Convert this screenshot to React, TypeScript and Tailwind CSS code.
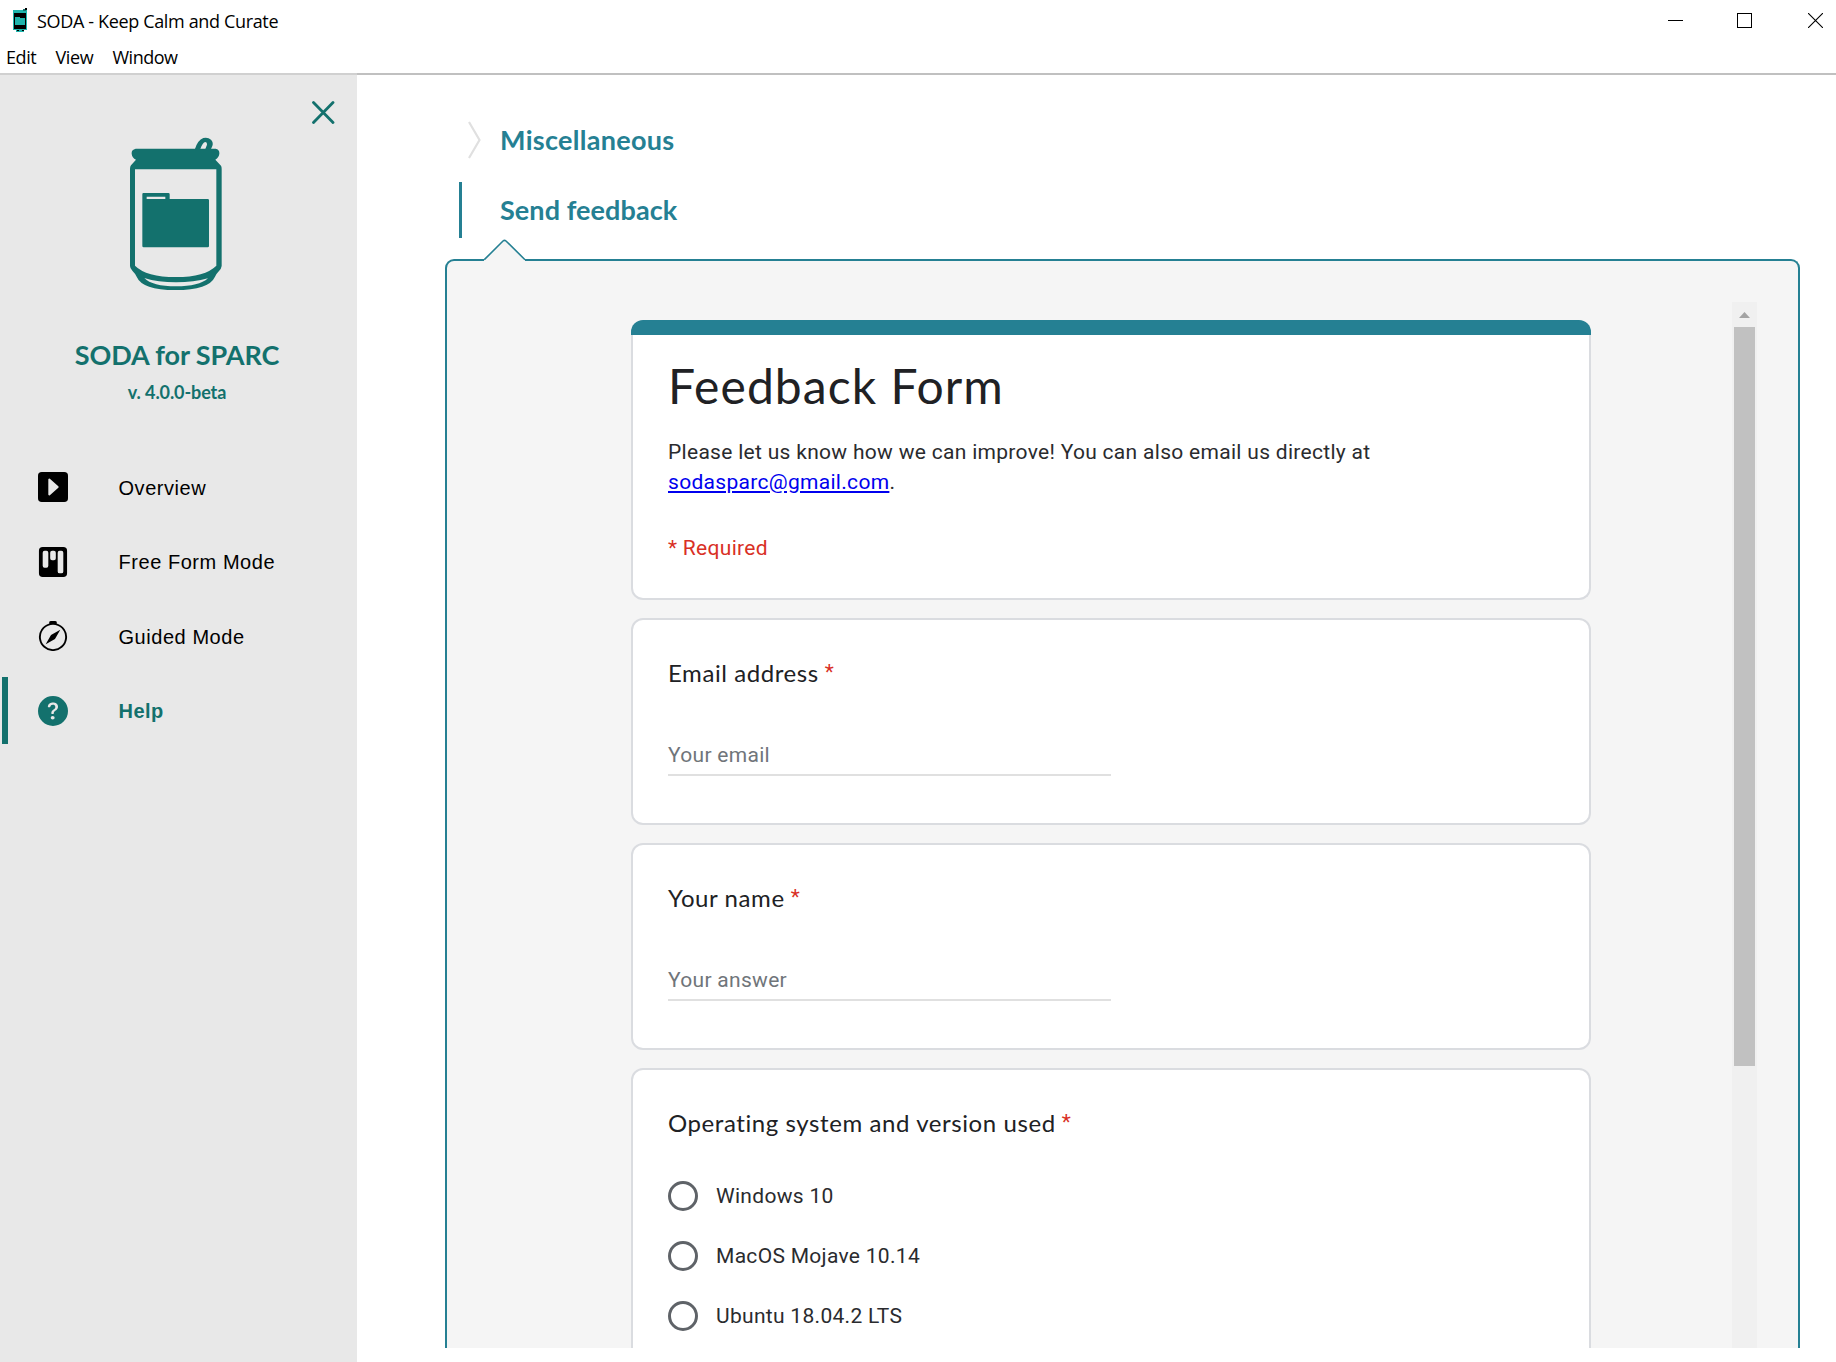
import type { ReactNode } from "react";
import {
  BsCaretRightSquareFill,
  BsCompass,
  BsKanbanFill,
  BsQuestionCircleFill,
} from "react-icons/bs";

function AppIcon() {
  return (
    <svg width="15" height="24" viewBox="0 0 15 24" shapeRendering="crispEdges">
      <rect x="0" y="2" width="14" height="20" fill="#1fb5ad" />
      <rect x="10" y="1" width="3" height="2" fill="#12736c" />
      <rect x="12" y="0" width="2" height="2" fill="#000" />
      <rect x="1" y="5" width="12" height="16" fill="#000" />
      <rect x="2" y="9" width="10" height="8" fill="#1fb5ad" />
      <rect x="7" y="9" width="5" height="1" fill="#000" />
      <rect x="3" y="21" width="8" height="3" fill="#1fb5ad" />
      <rect x="4" y="22" width="2" height="1" fill="#000" />
      <rect x="9" y="22" width="2" height="1" fill="#000" />
    </svg>
  );
}

function CanLogo() {
  return (
    <svg width="94" height="154" viewBox="210 171 282 462" fill="#13716d" className="mr-0.5">
      <path
        fillRule="evenodd"
        d="M230 206H470Q482 209 481 221Q480 232 469 239L486 257Q488 260 488 266V558Q487 566 480 573Q473 580 468 590Q450 630 349 630Q250 630 233 590Q229 581 220 572Q213 565 213 558V266Q213 260 216 256L231 239Q219 233 218 221Q217 209 230 206ZM228 268V557Q262 591 351 591Q438 591 472 557V268ZM256 594Q280 619 351 619Q420 619 447 595Q405 607 351 607Q297 607 256 594Z"
      />
      <path
        fillRule="evenodd"
        d="M407 209Q416 180 433 174Q447 171 456 179Q464 188 460 198L455 209ZM424 207Q431 187 439 186Q445 187 444 194L439 207Z"
      />
      <path
        fillRule="evenodd"
        d="M253 339H328Q332 339 332 343V357H446Q450 357 450 361V498Q450 502 446 502H254Q250 502 250 498V343Q250 339 253 339ZM263 350V357H319V350Z"
      />
    </svg>
  );
}

function WindowControls() {
  return (
    <div className="flex pt-[13px] pr-[13px]">
      <svg width="15" height="15" viewBox="0 0 15 15" className="mr-[54px]">
        <path d="M0 7.5H15" stroke="#000" />
      </svg>
      <svg width="15" height="15" viewBox="0 0 15 15" className="mr-14" fill="none">
        <rect x="0.5" y="0.5" width="14" height="14" stroke="#000" />
      </svg>
      <svg width="15" height="15" viewBox="0 0 15 15">
        <path d="M0 0L15 15M15 0L0 15" stroke="#000" strokeWidth="1.1" />
      </svg>
    </div>
  );
}

function NavItem({ icon, label, active }: { icon: ReactNode; label: string; active?: boolean }) {
  return (
    <li
      className={`flex h-[67px] items-center border-l-6 pl-[30px] ${
        active ? "border-[#13716d] font-bold text-[#13716d]" : "border-transparent text-black"
      }`}
    >
      <span className="w-[80.5px] text-[30px]">{icon}</span>
      <span className={`pt-px text-xl leading-6 ${active ? "tracking-[0.5px]" : "tracking-[0.55px]"}`}>{label}</span>
    </li>
  );
}

function Sidebar() {
  return (
    <aside className="flex w-[357px] shrink-0 flex-col border-t-2 border-[#d0d0d0] bg-[#e8e8e8]">
      <div className="flex justify-end pt-[26px] pr-[22.5px]">
        <svg width="23" height="23" viewBox="0 0 23 23" className="block">
          <path d="M1.5 1.5L21 21.5M21 1.5L1.5 21.5" stroke="#13716d" strokeWidth="2.8" strokeLinecap="round" />
        </svg>
      </div>
      <div className="flex flex-col items-center pt-[13px] pr-[3px] font-[Lato,sans-serif] font-bold text-[#13716d]">
        <CanLogo />
        <h1 className="mt-12 text-[27px] leading-8 tracking-[-0.08px]">SODA for SPARC</h1>
        <p className="mt-[9px] text-lg leading-6 tracking-[-0.1px]">v. 4.0.0-beta</p>
      </div>
      <ul className="mt-[49.5px] flex flex-col gap-[7.5px] pl-0.5 font-['Liberation_Sans',sans-serif]">
        <NavItem icon={<BsCaretRightSquareFill />} label="Overview" />
        <NavItem icon={<BsKanbanFill />} label="Free Form Mode" />
        <NavItem icon={<BsCompass />} label="Guided Mode" />
        <NavItem icon={<BsQuestionCircleFill />} label="Help" active />
      </ul>
    </aside>
  );
}

function Question({ title, children, tall }: { title: string; children: ReactNode; tall?: boolean }) {
  return (
    <section
      className={`shrink-0 rounded-xl border-2 border-[#dadce0] bg-white px-[35px] pt-[35px] ${
        tall ? "h-[400px]" : "h-[207px]"
      }`}
    >
      <h3 className="flex font-[Lato,sans-serif] text-2xl leading-9 tracking-[0.58px] text-[#202124]">
        {title}
        <span className="ml-1.5 font-[Roboto,sans-serif] text-[21px] leading-[35px] text-[#d93025]">*</span>
      </h3>
      {children}
    </section>
  );
}

function AnswerField({ placeholder }: { placeholder: string }) {
  return (
    <div className="mt-[49px] h-9 w-[443px] border-b-2 border-[#e0e0e0] text-[21px] leading-[30px] tracking-[0.3px] text-[#70757a]">
      {placeholder}
    </div>
  );
}

function Radio({ label }: { label: string }) {
  return (
    <div className="flex items-center gap-[18px]">
      <span className="size-[30px] rounded-full border-3 border-[#5f6368]" />
      <span className="text-[21px] leading-[30px] tracking-[0.3px] text-[#2a2b2e]">{label}</span>
    </div>
  );
}

function FeedbackForm() {
  return (
    <div className="flex w-[960px] flex-col gap-[18px] pt-[18px] font-[Roboto,sans-serif]">
      <section className="h-[280px] shrink-0">
        <div className="h-[15px] rounded-t-xl bg-[#258093]" />
        <div className="h-[265px] rounded-b-xl border-2 border-t-0 border-[#dadce0] bg-white px-[35px] pt-[21px]">
          <h2 className="font-[Lato,sans-serif] text-5xl leading-[60px] tracking-[1.05px] text-[#202124]">
            Feedback Form
          </h2>
          <p className="mt-[21px] text-[21px] leading-[30px] tracking-[0.3px] text-[#2a2b2e]">
            Please let us know how we can improve! You can also email us directly at
            <br />
            <a className="text-[#0000ee] underline">sodasparc@gmail.com</a>.
          </p>
          <p className="mt-9 text-[21px] leading-[30px] tracking-[0.3px] text-[#d93025]">* Required</p>
        </div>
      </section>
      <Question title="Email address">
        <AnswerField placeholder="Your email" />
      </Question>
      <Question title="Your name">
        <AnswerField placeholder="Your answer" />
      </Question>
      <Question title="Operating system and version used" tall>
        <div className="mt-10 flex flex-col gap-[30px]">
          <Radio label="Windows 10" />
          <Radio label="MacOS Mojave 10.14" />
          <Radio label="Ubuntu 18.04.2 LTS" />
        </div>
      </Question>
    </div>
  );
}

function ScrollBar() {
  return (
    <div className="flex w-[25px] flex-col items-center bg-[#f0f0f0]">
      <svg width="11" height="6" viewBox="0 0 11 6" className="mt-2.5 block">
        <path d="M0 6L5.5 0L11 6Z" fill="#a3a3a3" />
      </svg>
      <div className="mt-[9px] h-[739px] w-[21px] bg-[#c1c1c1]" />
    </div>
  );
}

function Panel() {
  return (
    <div className="relative flex h-[1089px] w-[1355px] rounded-t-[9px] border-2 border-b-0 border-[#258093] bg-[#f5f5f5]">
      <svg width="42" height="22" viewBox="0 0 42 22" className="absolute -top-[22px] left-[36.5px]">
        <path d="M0 22V20.5L18.5 2Q20.5 0.8 22 2L41 20.5V22Z" fill="#f5f5f5" />
        <path d="M0.3 20.7L19 2Q20.5 0.8 22 2L41 20.7" fill="none" stroke="#258093" strokeWidth="1.6" />
      </svg>
      <div className="mt-[41px] mr-[41px] ml-[184px] flex flex-1 justify-between overflow-hidden">
        <FeedbackForm />
        <ScrollBar />
      </div>
    </div>
  );
}

function MainContent() {
  return (
    <main className="flex flex-1 flex-col overflow-hidden border-t-2 border-[#c0c0c0] pt-[30px] pl-[88px] font-[Lato,sans-serif]">
      <div className="flex h-[70px] items-center pl-[22px]">
        <svg width="14" height="40" viewBox="0 0 14 40">
          <path d="M2 2L12.5 20L2 38" fill="none" stroke="#e0e0e0" strokeWidth="2.2" />
        </svg>
        <h2 className="ml-[19px] text-[27px] leading-8 font-bold tracking-[0.3px] text-[#258093]">Miscellaneous</h2>
      </div>
      <div className="mt-[7px] ml-[14px] flex h-14 items-center border-l-3 border-[#258093] pl-[38px]">
        <h2 className="text-[27px] leading-8 font-bold tracking-[0.08px] text-[#258093]">Send feedback</h2>
      </div>
      <div className="mt-[21px] shrink-0">
        <Panel />
      </div>
    </main>
  );
}

export default function App() {
  return (
    <div className="flex h-[1362px] w-[1836px] flex-col overflow-hidden bg-white">
      <header className="h-[73px] shrink-0 font-['Open_Sans',sans-serif] text-lg leading-6 text-black">
        <div className="flex h-[45px] justify-between">
          <div className="flex pt-2 pl-[13px]">
            <AppIcon />
            <span className="ml-[9px] pt-px tracking-[-0.35px]">SODA - Keep Calm and Curate</span>
          </div>
          <WindowControls />
        </div>
        <nav className="flex pl-1.5">
          <span className="w-[49.5px] tracking-[-0.4px]">Edit</span>
          <span className="w-[57px] tracking-[-0.4px]">View</span>
          <span className="tracking-[-0.5px]">Window</span>
        </nav>
      </header>
      <div className="flex min-h-0 flex-1">
        <Sidebar />
        <MainContent />
      </div>
    </div>
  );
}
